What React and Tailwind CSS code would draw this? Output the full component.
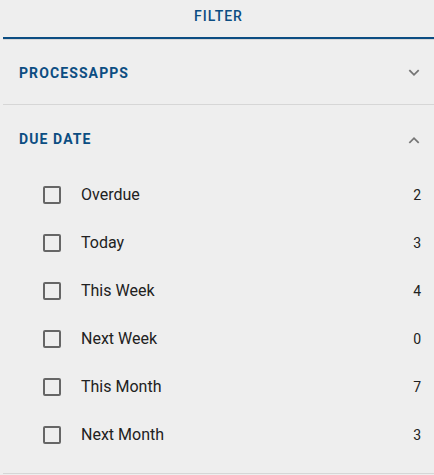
import React from "react";

const rows = [
  ["Overdue", 2],
  ["Today", 3],
  ["This Week", 4],
  ["Next Week", 0],
  ["This Month", 7],
  ["Next Month", 3],
];

function Chevron({ up }) {
  return (
    <svg width="14" height="14" viewBox="0 0 24 24" className="text-[#757575]">
      <path
        d={up ? "M5 16l7-7 7 7" : "M5 8l7 7 7-7"}
        fill="none"
        stroke="currentColor"
        strokeWidth="3"
        strokeLinecap="square"
      />
    </svg>
  );
}

export default function App() {
  return (
    <div className="w-[434px] h-[475px] bg-[#eeeeee] pl-[3px] overflow-hidden font-['Roboto',sans-serif]">
      <div className="border-b border-[#d6d6d6]">
        <div className="h-[39px] flex items-center justify-center pb-[4px] border-b-2 border-[#0c4d82] text-[14px] font-medium tracking-[1px] text-[#0c4d82]">
          FILTER
        </div>
      </div>
      <div className="h-[65px] flex items-center justify-between pl-4 pr-[13px] pt-[2px] border-b border-[#d6d6d6]">
        <span className="text-[14px] font-bold tracking-[1.1px] text-[#0c4d82]">PROCESSAPPS</span>
        <Chevron />
      </div>
      <div className="border-b border-[#d6d6d6]">
        <div className="h-[66px] flex items-center justify-between pl-4 pr-[13px] pt-[3px]">
          <span className="text-[14px] font-bold tracking-[1.1px] text-[#0c4d82]">DUE DATE</span>
          <Chevron up />
        </div>
        <div className="pb-[14px]">
          {rows.map(([label, n]) => (
            <div key={label} className="h-12 flex items-center pl-10 pr-[13px]">
              <div className="w-[18px] h-[18px] border-2 border-[#666666] rounded-[2px]" />
              <span className="ml-[20px] text-[16px] text-[#212121] flex-1">{label}</span>
              <span className="text-[14px] text-[#212121]">{n}</span>
            </div>
          ))}
        </div>
      </div>
    </div>
  );
}
